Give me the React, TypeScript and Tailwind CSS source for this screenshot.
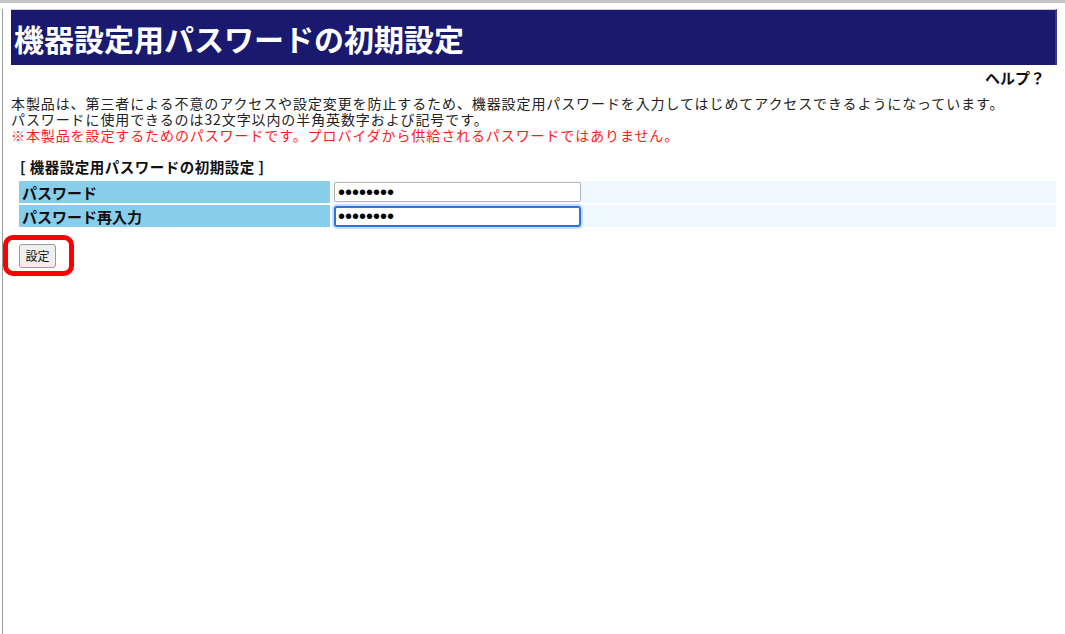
import React from 'react';

const jp = "font-['Meiryo','Noto_Sans_CJK_JP',sans-serif]";

const FieldRow: React.FC<{ label: string; focused?: boolean }> = ({ label, focused }) => (
    <>
        <div className="bg-[#87ceeb] h-[22px] flex items-center pl-[3px] text-[15px] font-bold text-[#111] leading-none">
            {label}
        </div>
        <div className="bg-[#f0f8ff] h-[22px] flex items-center pl-[2px]">
            <input
                type="password"
                defaultValue="12345678"
                readOnly
                className={
                    focused
                        ? "w-[247px] h-[21px] rounded-[3px] border-2 border-[#2f72d8] shadow-[0_0_0_2px_#c6e0fb] bg-white px-[2px] font-['Liberation_Sans',sans-serif] text-[20px] leading-none text-black outline-none"
                        : "w-[247px] h-[20px] rounded-[2px] border border-[#b5b5b5] bg-white px-[3px] font-['Liberation_Sans',sans-serif] text-[20px] leading-none text-black outline-none"
                }
            />
        </div>
    </>
);

const App: React.FC = () => {
    return (
        <div className={`${jp} w-[1065px] h-[634px] bg-white border-t-[3px] border-[#c6c6c6] overflow-hidden`}>
            <div className="ml-[2px] h-full border-l border-[#9c9c9c]">
                {/* title bar */}
                <div className="mt-[6px] ml-[8px] mr-[8px] h-[56px] bg-[#191970] border-t border-[#c8c8dc] border-r-2 border-r-[#3a3a8a] flex items-center pl-[3px]">
                    <h1 className="text-white text-[30px] font-bold leading-none">
                        機器設定用パスワードの初期設定
                    </h1>
                </div>

                {/* help */}
                <div className="h-[24px] flex items-center justify-end pr-[20px]">
                    <span className="text-[15px] font-bold text-[#111] leading-none">ヘルプ？</span>
                </div>

                {/* description */}
                <div className="mt-[6px] pl-[8px] text-[14px] tracking-[0.9px] leading-[16px] text-[#222]">
                    <p>本製品は、第三者による不意のアクセスや設定変更を防止するため、機器設定用パスワードを入力してはじめてアクセスできるようになっています。</p>
                    <p>パスワードに使用できるのは32文字以内の半角英数字および記号です。</p>
                    <p className="text-[#ff1a1a]">※本製品を設定するためのパスワードです。プロバイダから供給されるパスワードではありません。</p>
                </div>

                {/* section */}
                <div className="mt-[15px] pl-[17px] h-[18px] flex items-center text-[14.5px] tracking-[0.5px] font-bold text-[#111] leading-none">
                    [ 機器設定用パスワードの初期設定 ]
                </div>

                <div className="mt-[3px] ml-[14px] mr-[7px] grid grid-cols-[311px_1fr] gap-[2px] p-[2px]">
                    <FieldRow label="パスワード" />
                    <FieldRow label="パスワード再入力" focused />
                </div>

                {/* submit, with the red callout frame */}
                <div className="mt-[6px] w-[71px] h-[41px] border-[5px] border-[#ff0000] rounded-[10px] pl-[11px] pt-[4px]">
                    <button className="w-[37px] h-[24px] bg-[#efefef] border border-[#9a9a9a] rounded-[3px] text-[12px] text-[#111] leading-none flex items-center justify-center">
                        設定
                    </button>
                </div>
            </div>
        </div>
    );
};

export default App;
